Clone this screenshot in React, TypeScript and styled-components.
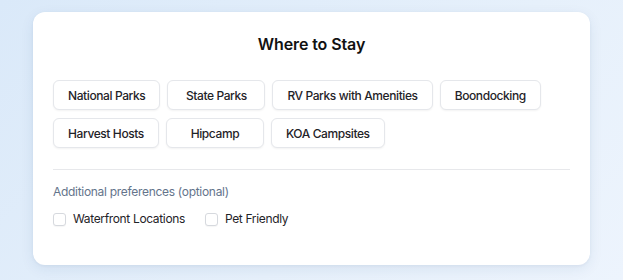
import React, { useState } from "react";
import styled, { createGlobalStyle } from "styled-components";

const GlobalStyle = createGlobalStyle`
  * {
    box-sizing: border-box;
  }
  body {
    margin: 0;
    font-family: Inter, "Liberation Sans", sans-serif;
    color: #111827;
  }
`;

const Page = styled.div`
  min-height: 280px;
  padding: 12px 33px 15px;
  background: linear-gradient(135deg, #dae9f9 0%, #e6f0fb 60%, #edf4fd 100%);
`;

const Card = styled.div`
  background: #ffffff;
  border-radius: 12px;
  box-shadow: 0 4px 14px rgba(30, 64, 120, 0.08), 0 1px 3px rgba(30, 64, 120, 0.06);
  padding: 20px 20px 36px;
  min-height: 253px;
`;

const Title = styled.h2`
  margin: 0 0 24px;
  font-size: 16px;
  line-height: 24px;
  font-weight: 600;
  letter-spacing: -0.1px;
  text-align: center;
  color: #111111;
`;

const ChipGroup = styled.div`
  display: flex;
  flex-wrap: wrap;
  gap: 8px 7px;
`;

const Chip = styled.button<{ $active?: boolean }>`
  height: 30px;
  min-width: 98px;
  padding: 0 14px;
  border-radius: 6px;
  border: 1px solid ${(p) => (p.$active ? "#3b82f6" : "#e5e7eb")};
  background: ${(p) => (p.$active ? "#eff6ff" : "#ffffff")};
  box-shadow: 0 1px 2px rgba(0, 0, 0, 0.05);
  font-family: inherit;
  font-size: 12px;
  font-weight: 500;
  letter-spacing: -0.4px;
  color: #1f2328;
  cursor: pointer;
`;

const Divider = styled.hr`
  border: none;
  border-top: 1px solid #e7e8eb;
  margin: 21px 0 14px;
`;

const Subtitle = styled.div`
  font-size: 12px;
  line-height: 16px;
  letter-spacing: -0.3px;
  color: #64748b;
  margin-bottom: 10px;
`;

const CheckRow = styled.div`
  display: flex;
  gap: 20px;
  align-items: center;
`;

const CheckLabel = styled.label`
  display: flex;
  align-items: center;
  gap: 7px;
  font-size: 12px;
  line-height: 18px;
  letter-spacing: -0.35px;
  color: #1f2328;
  cursor: pointer;
`;

const Box = styled.span<{ $checked: boolean }>`
  width: 13px;
  height: 13px;
  border-radius: 3px;
  border: 1px solid #d6d9de;
  background: ${(p) => (p.$checked ? "#3b82f6" : "#ffffff")};
  box-shadow: 0 1px 1px rgba(0, 0, 0, 0.04);
`;

const stays = [
  "National Parks",
  "State Parks",
  "RV Parks with Amenities",
  "Boondocking",
  "Harvest Hosts",
  "Hipcamp",
  "KOA Campsites",
];

const extras = ["Waterfront Locations", "Pet Friendly"];

const App = () => {
  const [picked, setPicked] = useState<string[]>([]);
  const [checks, setChecks] = useState<string[]>([]);

  const toggle = (list: string[], set: (v: string[]) => void, item: string) =>
    set(list.includes(item) ? list.filter((x) => x !== item) : [...list, item]);

  return (
    <>
      <GlobalStyle />
      <Page>
        <Card>
          <Title>Where to Stay</Title>
          <ChipGroup>
            {stays.map((s) => (
              <Chip
                key={s}
                $active={picked.includes(s)}
                onClick={() => toggle(picked, setPicked, s)}
              >
                {s}
              </Chip>
            ))}
          </ChipGroup>
          <Divider />
          <Subtitle>Additional preferences (optional)</Subtitle>
          <CheckRow>
            {extras.map((e) => (
              <CheckLabel key={e} onClick={() => toggle(checks, setChecks, e)}>
                <Box $checked={checks.includes(e)} />
                {e}
              </CheckLabel>
            ))}
          </CheckRow>
        </Card>
      </Page>
    </>
  );
};

export default App;
